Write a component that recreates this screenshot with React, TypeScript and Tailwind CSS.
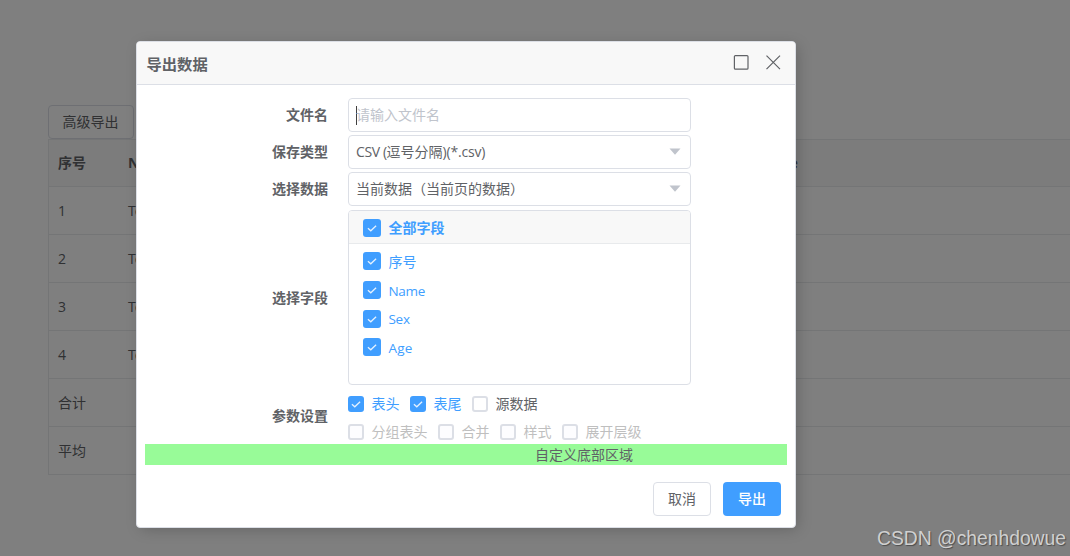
import React from "react";

const FONT = "font-['Open_Sans','Noto_Sans_CJK_SC',sans-serif]";

function Check({ size, checked, disabled }: { size: "md" | "sm"; checked?: boolean; disabled?: boolean }) {
  const dim = size === "md" ? "size-[18px]" : "size-4";
  if (!checked) {
    return (
      <span
        className={`${dim} shrink-0 rounded-[3px] border-2 border-[#dcdfe6] ${disabled ? "bg-[#fdfdff]" : "bg-white"}`}
      />
    );
  }
  return (
    <span className={`${dim} flex shrink-0 items-center justify-center rounded-[3px] bg-[#409eff]`}>
      <svg width="10" height="8" viewBox="0 0 10 8" fill="none" stroke="#e4f1ff" strokeWidth="1.3">
        <path d="M0.9 4.2L3.8 6.8L9.1 1.8" />
      </svg>
    </span>
  );
}

function Row({ label, height, children }: { label: string; height: string; children: React.ReactNode }) {
  return (
    <div className={`flex items-center ${height}`}>
      <div className="w-[191px] shrink-0 text-right font-bold">{label}</div>
      <div className="ml-5 h-full w-[343px]">{children}</div>
    </div>
  );
}

function Select({ children }: { children: React.ReactNode }) {
  return (
    <div className="flex h-[34px] items-center justify-between rounded-[4px] border border-[#dcdfe6] pr-[9px] pl-[7px]">
      <span className="whitespace-nowrap">{children}</span>
      <svg width="12" height="7" viewBox="0 0 12 7" className="mb-[2px]">
        <path d="M0.5 0.5H11.5L6 6.7Z" fill="#c0c4cc" />
      </svg>
    </div>
  );
}

function Option({ label, checked, className }: { label: string; checked?: boolean; className?: string }) {
  const color = checked ? "text-[#409eff]" : className ?? "text-[#606266]";
  return (
    <div className={`flex items-center gap-2 whitespace-nowrap ${color}`}>
      <Check size="sm" checked={checked} disabled={!!className} />
      <span className="-ml-[0.5px] pr-[0.5px]">{label}</span>
    </div>
  );
}

const rows = [
  ["1", "Test1"],
  ["2", "Test2"],
  ["3", "Test3"],
  ["4", "Test4"],
  ["合计", ""],
  ["平均", ""],
];

const fields = [
  { name: "序号", cls: "mt-2", text: "pt-[2px]" },
  { name: "Name", cls: "mt-[11px]", text: "pt-px text-[13.5px] tracking-[-0.3px]" },
  { name: "Sex", cls: "mt-[11px]", text: "text-[13.5px] tracking-[-0.3px]" },
  { name: "Age", cls: "mt-[10px]", text: "pt-[2px] text-[13.5px] tracking-[0.2px]" },
];

export default function App() {
  return (
    <div className={`relative h-[556px] w-[1070px] overflow-hidden bg-white text-[14px] leading-5 text-[#606266] ${FONT}`}>
      <div className="pt-[105px] pl-12">
        <button className="block h-[34px] w-[86px] rounded-[4px] border border-[#dcdfe6] pr-px">高级导出</button>
        <div className="border-t border-l border-[#e8eaec]">
          <div className="flex h-[47px] items-center border-b border-[#e8eaec] bg-[#f8f8f9] font-bold">
            <span className="w-[70px] pl-[9px]">序号</span>
            <span className="w-[632px] pl-[9px]">Name</span>
            <span className="pl-[21px]">Age</span>
          </div>
          {rows.map(([a, b]) => (
            <div key={a} className="flex h-12 items-center border-b border-[#e8eaec]">
              <span className="w-[70px] pl-[9px]">{a}</span>
              <span className="pl-[9px] tracking-[-1px]">{b}</span>
            </div>
          ))}
        </div>
      </div>

      <div className="absolute inset-0 bg-black/50 pt-[41px] pl-[136px]">
        <div className="flex h-[487px] w-[660px] flex-col overflow-hidden rounded-[4px] border border-[#dcdfe6] bg-white shadow-[3px_3px_15px_-2px_rgba(0,0,0,0.22)]">
          <div className="flex h-[43px] shrink-0 items-center justify-between border-b border-[#dcdfe6] bg-[#f8f8f8] pr-[14px] pl-[9.5px]">
            <span className="mt-px text-[15.3px] font-bold">导出数据</span>
            <div className="flex items-center gap-4 pb-[2px]">
              <svg width="16" height="16" viewBox="0 0 16 16" fill="none" stroke="#606266" strokeWidth="1.2">
                <rect x="1.4" y="1.6" width="13.6" height="13.6" rx="1" />
              </svg>
              <svg width="16" height="16" viewBox="0 0 16 16" fill="none" stroke="#606266" strokeWidth="1.2">
                <path d="M1.5 1.7L15 15.2M15 1.7L1.5 15.2" />
              </svg>
            </div>
          </div>

          <div className="flex flex-col gap-[3px] pt-[13px]">
            <Row label="文件名" height="h-[34px]">
              <div className="flex h-[34px] items-center rounded-[4px] border border-[#dcdfe6] pl-[7px] text-[#c0c4cc]">
                <span className="-mr-px h-[19px] w-px bg-[#404040]" />
                请输入文件名
              </div>
            </Row>
            <Row label="保存类型" height="h-[34px]">
              <Select>
                <span className="tracking-[-0.4px]">CSV (</span>逗号分隔<span className="tracking-[-0.2px]">)(*.csv)</span>
              </Select>
            </Row>
            <Row label="选择数据" height="h-[34px]">
              <Select>当前数据（当前页的数据）</Select>
            </Row>
          </div>

          <div className="mt-1">
            <Row label="选择字段" height="h-[175px]">
              <div className="h-full overflow-hidden rounded-[4px] border border-[#dcdfe6]">
                <div className="flex h-[33px] items-center gap-2 border-b border-[#e8eaec] bg-[#f8f8f8] pt-[2px] pl-[14px] font-bold text-[#409eff]">
                  <Check size="md" checked />
                  <span className="-ml-[0.5px]">全部字段</span>
                </div>
                {fields.map((f) => (
                  <div key={f.name} className={`flex h-[18px] items-center gap-2 pl-[14px] text-[#409eff] ${f.cls}`}>
                    <Check size="md" checked />
                    <span className={`-ml-[0.5px] ${f.text}`}>{f.name}</span>
                  </div>
                ))}
              </div>
            </Row>
          </div>

          <Row label="参数设置" height="h-[59px] pt-[2px]">
            <div className="flex flex-col gap-2 pt-[7px]">
              <div className="flex gap-[10px]">
                <Option label="表头" checked />
                <Option label="表尾" checked />
                <Option label="源数据" />
              </div>
              <div className="flex gap-[10px]">
                <Option label="分组表头" className="text-[#bfbfbf]" />
                <Option label="合并" className="text-[#bfbfbf]" />
                <Option label="样式" className="text-[#bfbfbf]" />
                <Option label="展开层级" className="text-[#bfbfbf]" />
              </div>
            </div>
          </Row>

          <div className="mx-2 h-[21px] shrink-0 bg-[#98fb98] pl-[236px] text-center leading-[21px]">自定义底部区域</div>

          <div className="mt-[17px] flex justify-end gap-3 pr-[14px]">
            <button className="h-[34px] w-[58px] rounded-[4px] border border-[#dcdfe6]">取消</button>
            <button className="h-[34px] w-[58px] rounded-[4px] bg-[#409eff] font-medium text-white">导出</button>
          </div>
        </div>
      </div>

      <div className="absolute right-[4px] bottom-[5px] font-['Liberation_Sans',sans-serif] text-[19.3px] leading-6 whitespace-nowrap text-[#d0d0d0] [text-shadow:1px_1px_1px_rgba(0,0,0,0.4)]">
        CSDN @chenhdowue
      </div>
    </div>
  );
}
